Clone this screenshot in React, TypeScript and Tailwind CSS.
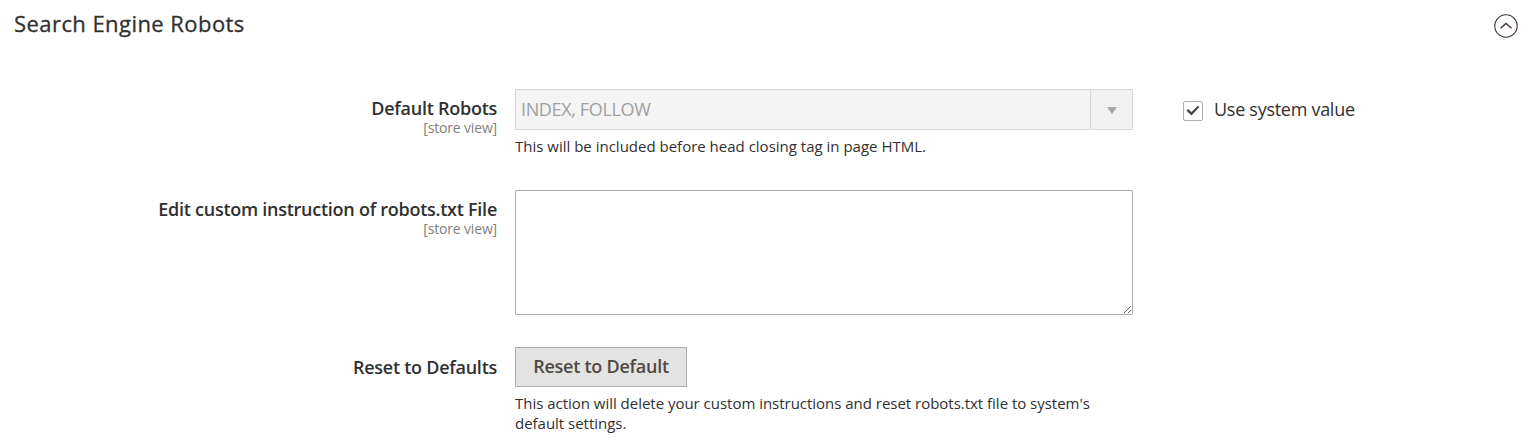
import React from "react";

function Label({ title, scope }: { title: string; scope?: string }) {
  return (
    <div className="w-[497px] shrink-0 text-right">
      <div className="text-[18px] leading-[22px] font-semibold tracking-[-0.26px] whitespace-nowrap">{title}</div>
      {scope && <div className="mt-px text-[14px] leading-[16px] tracking-[-0.17px] text-[#808080]">{scope}</div>}
    </div>
  );
}

export default function App() {
  return (
    <main className="h-[446px] w-full overflow-hidden bg-white font-['Open_Sans',sans-serif] text-[#303030]">
      <header className="flex h-[89px] items-start justify-between pl-3.5 pr-[18px]">
        <h2 className="pt-2 text-[22px] leading-[30px] tracking-[0.44px] [-webkit-text-stroke:0.3px_#303030]">Search Engine Robots</h2>
        <button className="mt-3.5" aria-label="Collapse">
          <svg width="24" height="24" viewBox="0 0 24 24" fill="none" stroke="#41362f">
            <circle cx="12" cy="12" r="11.2" strokeWidth="1.1" />
            <path d="M6.5 14.2 12 9.5l5.5 4.7" strokeWidth="1.4" />
          </svg>
        </button>
      </header>
      <section className="flex h-[101px]">
        <div className="pt-2"><Label title="Default Robots" scope="[store view]" /></div>
        <div className="ml-[18px] w-[618px]">
          <div className="flex h-[41px] rounded-[1px] border border-[#d6d6d6] bg-[#f4f4f4]">
            <span className="flex-1 pl-[5px] text-[18px] leading-[39px] tracking-[-0.36px] text-[#a0a0a0]">INDEX, FOLLOW</span>
            <span className="flex w-[42px] items-center justify-center border-l border-[#d6d6d6] bg-[#f1f1f1] pt-0.5">
              <svg width="10" height="7" viewBox="0 0 10 7"><path d="M0 0h10L5 7z" fill="#a8a6a5" /></svg>
            </span>
          </div>
          <p className="mt-1.5 text-[15px] leading-5">This will be included before head closing tag in page HTML.</p>
        </div>
        <label className="ml-[50px] flex h-[41px] items-center gap-[11px] text-[18px]">
          <span className="mt-[3px] flex size-5 items-center justify-center rounded-[2px] border border-[#adadad] pb-0.5">
            <svg width="14" height="11" viewBox="0 0 14 11"><path d="M.5 5.7 2.3 4l3.2 3L11.8.7 13.5 2 5.5 10.5z" fill="#514943" /></svg>
          </span>
          <span className="tracking-[-0.28px]">Use system value</span>
        </label>
      </section>
      <section className="flex h-[157px]">
        <div className="pt-2"><Label title="Edit custom instruction of robots.txt File" scope="[store view]" /></div>
        <textarea className="ml-[18px] h-[125px] w-[618px] rounded-[1px] border border-[#adadad]" />
      </section>
      <section className="flex">
        <div className="pt-[9px]"><Label title="Reset to Defaults" /></div>
        <div className="ml-[18px] w-[618px]">
          <button className="block h-10 w-[172px] border border-[#adadad] bg-[#e3e3e3] pb-0.5 text-[18px] font-semibold tracking-[-0.25px] text-[#514943]">Reset to Default</button>
          <p className="mt-1.5 text-[15px] leading-5 tracking-[-0.02px]">This action will delete your custom instructions and reset robots.txt file to system's default settings.</p>
        </div>
      </section>
    </main>
  );
}
